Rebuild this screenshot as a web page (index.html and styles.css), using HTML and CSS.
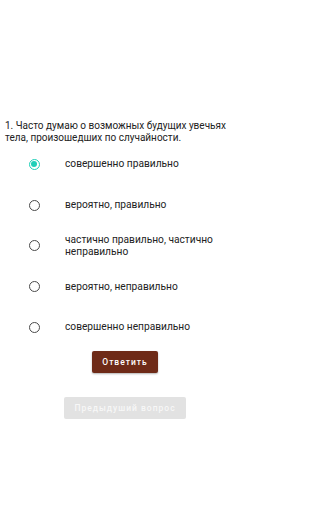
FILE: index.html
```html
<!DOCTYPE html>
<html>
<head>
<meta charset="utf-8">
<link rel="stylesheet" href="styles.css">
</head>
<body>
<div class="page">
  <p class="question">1. Часто думаю о возможных будущих увечьях тела, произошедших по случайности.</p>
  <div class="options">
    <label class="option"><span class="radio checked"></span><span class="label">совершенно правильно</span></label>
    <label class="option"><span class="radio"></span><span class="label">вероятно, правильно</span></label>
    <label class="option"><span class="radio"></span><span class="label">частично правильно, частично неправильно</span></label>
    <label class="option"><span class="radio"></span><span class="label">вероятно, неправильно</span></label>
    <label class="option"><span class="radio"></span><span class="label">совершенно неправильно</span></label>
  </div>
  <div class="actions">
    <button class="btn primary">Ответить</button>
    <button class="btn disabled">Предыдуший вопрос</button>
  </div>
</div>
</body>
</html>
```

FILE: styles.css
```css
html, body {
  margin: 0;
  padding: 0;
  background: #ffffff;
}
body {
  font-family: Roboto, "Noto Sans", sans-serif;
  color: #1a1a1a;
}
.page {
  width: 250px;
  padding-top: 120px;
}
.question {
  margin: 0;
  padding: 0 5px;
  font-size: 10px;
  line-height: 12px;
  color: #222;
}
.options {
  display: flex;
  flex-direction: column;
  margin-top: 0;
}
.option {
  display: flex;
  align-items: center;
  min-height: 40.75px;
}
.radio {
  flex: none;
  width: 9px;
  height: 9px;
  border: 1.8px solid #4a4a4a;
  border-radius: 50%;
  margin-left: 28.5px;
  margin-right: 25.5px;
  box-sizing: content-box;
  position: relative;
}
.radio.checked {
  border-color: #1fcfb8;
}
.radio.checked::after {
  content: "";
  position: absolute;
  left: 1.5px;
  top: 1.5px;
  width: 6px;
  height: 6px;
  border-radius: 50%;
  background: #1fcfb8;
}
.label {
  font-size: 10.2px;
  line-height: 12px;
  color: #222;
  padding-right: 20px;
}
.actions {
  display: flex;
  flex-direction: column;
  align-items: center;
  margin-top: 3px;
  gap: 24px;
}
.btn {
  font-family: Roboto, "Noto Sans", sans-serif;
  font-weight: 500;
  font-size: 8.5px;
  letter-spacing: 1px;
  border: none;
  border-radius: 2px;
  padding: 0;
  height: 22px;
}
.primary {
  width: 66px;
  background: #6e2a17;
  color: #ffffff;
  box-shadow: 0 1px 2px rgba(0,0,0,0.3);
}
.disabled {
  width: 122px;
  background: #e2e2e2;
  color: #f7f7f7;
}
```
